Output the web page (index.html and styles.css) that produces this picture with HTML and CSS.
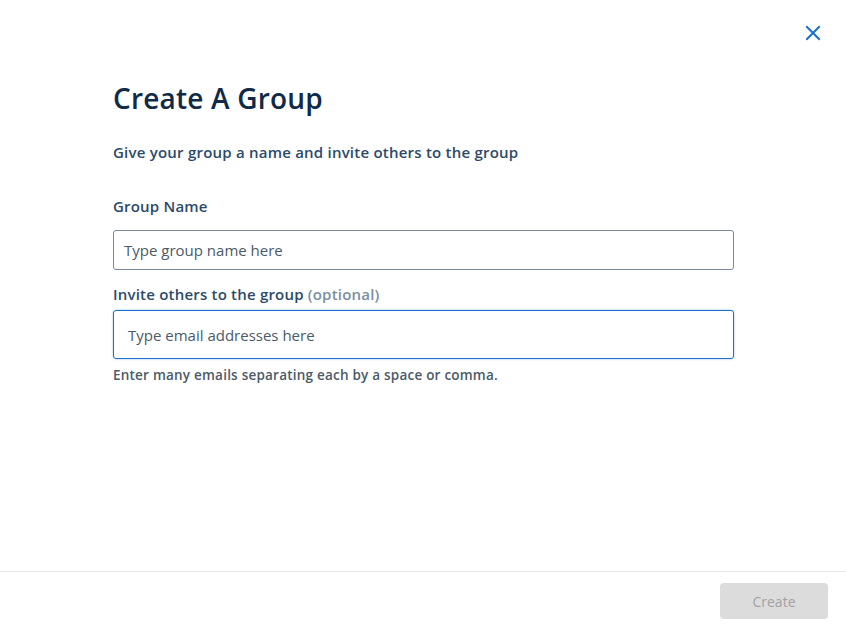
FILE: index.html
```html
<!DOCTYPE html>
<html>
<head>
<meta charset="utf-8">
<link rel="stylesheet" href="styles.css">
</head>
<body>
<div class="modal">
  <button class="close" aria-label="Close">
    <svg width="16" height="16" viewBox="0 0 16 16"><path d="M2 2 L14 14 M14 2 L2 14" stroke="#1b6ed2" stroke-width="2" stroke-linecap="square" fill="none"/></svg>
  </button>
  <div class="body">
    <h1 class="title">Create A Group</h1>
    <p class="subtitle">Give your group a name and invite others to the group</p>
    <label class="label">Group Name</label>
    <div class="input input-name">Type group name here</div>
    <label class="label label-invite">Invite others to the group <span class="optional">(optional)</span></label>
    <div class="input input-email">Type email addresses here</div>
    <p class="help">Enter many emails separating each by a space or comma.</p>
  </div>
  <div class="footer">
    <button class="create">Create</button>
  </div>
</div>
</body>
</html>
```
FILE: styles.css
```css
html, body {
  margin: 0;
  padding: 0;
  background: #ffffff;
}
body {
  font-family: "Open Sans", "Noto Sans", sans-serif;
  color: #0f2846;
}
.modal {
  position: relative;
  width: 846px;
  height: 630px;
  display: flex;
  flex-direction: column;
  box-sizing: border-box;
}
.close {
  position: absolute;
  top: 25px;
  right: 25px;
  border: 0;
  background: none;
  padding: 0;
  width: 16px;
  height: 16px;
  cursor: pointer;
}
.body {
  flex: 1;
  padding: 78px 112px 0 113px;
}
.title {
  margin: 0;
  font-size: 28px;
  font-weight: 600;
  color: #102a47;
  line-height: 40px;
  letter-spacing: 0.2px;
}
.subtitle {
  margin: 24px 0 0;
  font-size: 15px;
  font-weight: 600;
  color: #2b4a6b;
  line-height: 20px;
  letter-spacing: 0.22px;
}
.label {
  display: block;
  margin-top: 34px;
  font-size: 15px;
  font-weight: 600;
  color: #2b4a6b;
  line-height: 20px;
  letter-spacing: 0.2px;
}
.label-invite {
  margin-top: 14px;
}
.optional {
  color: #7b8ea1;
}
.input {
  box-sizing: border-box;
  width: 621px;
  margin-top: 14px;
  border-radius: 3px;
  font-size: 15px;
  color: #4b5a69;
  display: flex;
  align-items: center;
}
.input-name {
  height: 40px;
  border: 1px solid #7a8794;
  padding-left: 10px;
}
.input-email {
  height: 49px;
  margin-top: 6px;
  border: 1px solid #1b6ed2;
  box-shadow: 0 0 2px rgba(27, 110, 210, 0.5);
  padding-left: 14px;
}
.help {
  margin: 7px 0 0;
  font-size: 13.5px;
  font-weight: 600;
  color: #4b5a69;
  line-height: 18px;
  letter-spacing: 0.22px;
}
.footer {
  height: 59px;
  border-top: 1px solid #e8eaec;
  display: flex;
  justify-content: flex-end;
  align-items: flex-start;
  padding: 11px 18px 0 0;
  box-sizing: border-box;
}
.create {
  width: 108px;
  height: 36px;
  border: 0;
  border-radius: 4px;
  background: #dcdcdc;
  color: #a2a2a2;
  font-family: "Open Sans", "Noto Sans", sans-serif;
  font-size: 14px;
}
```
